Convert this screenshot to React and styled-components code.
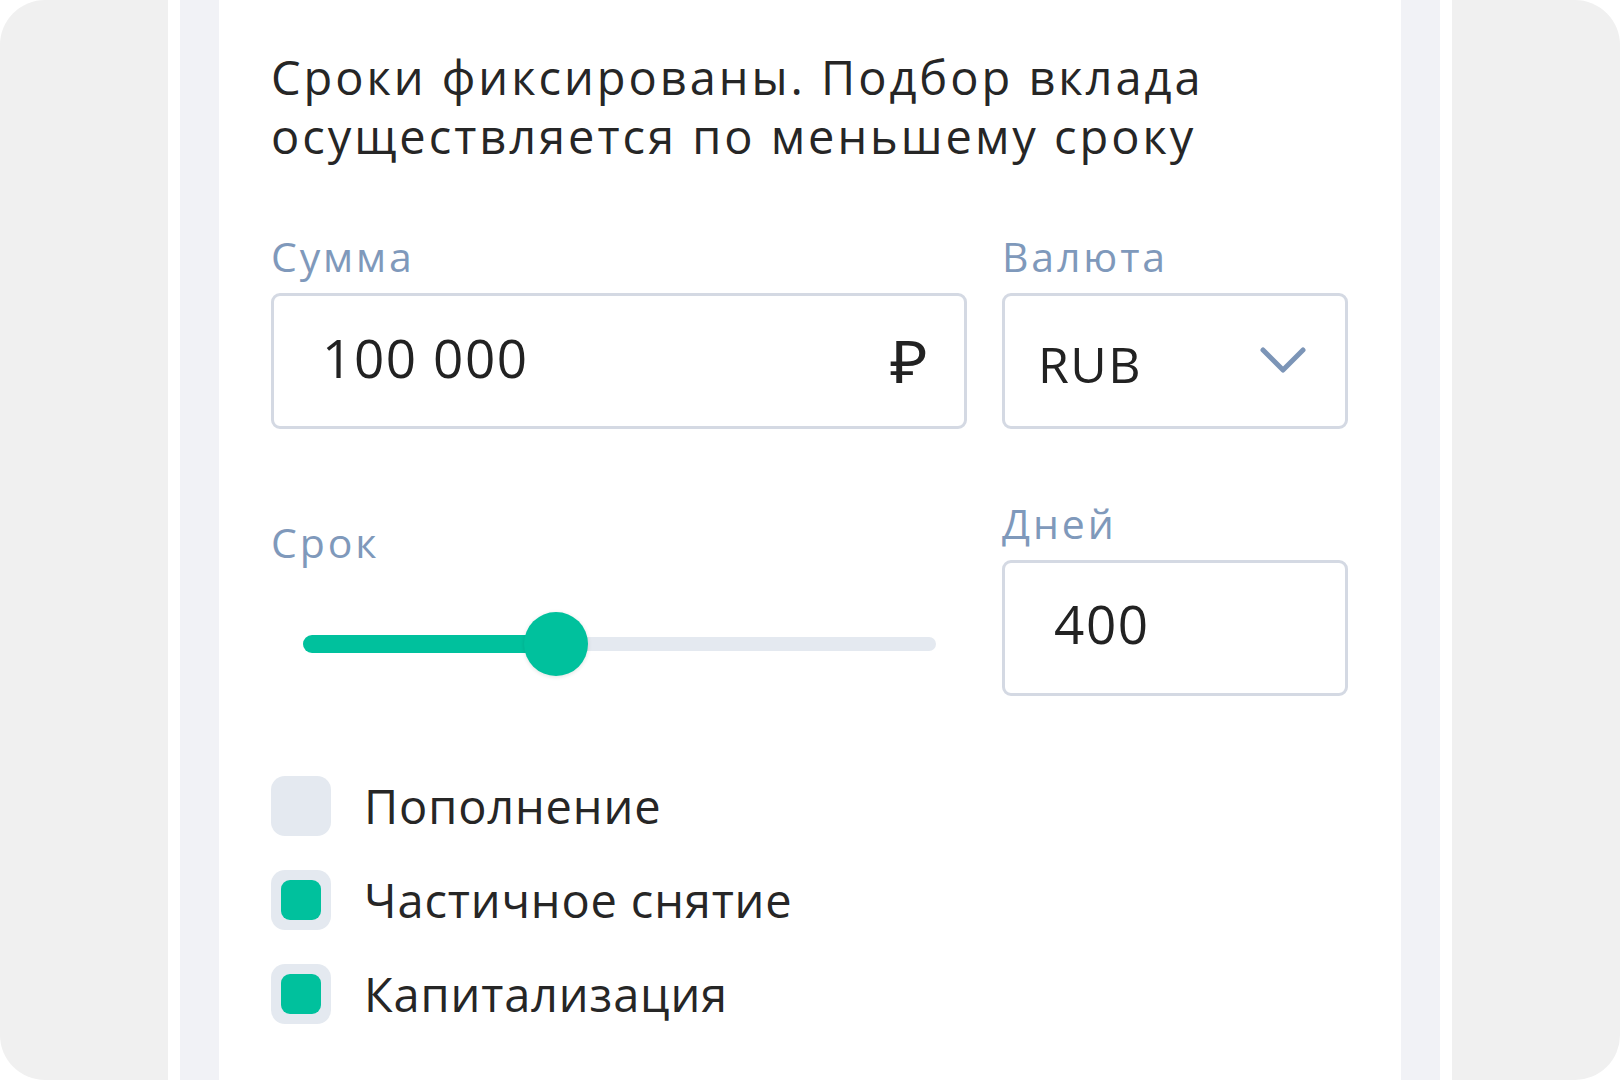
import React, { useState } from "react";
import styled, { createGlobalStyle } from "styled-components";

const GlobalStyle = createGlobalStyle`
  html, body {
    margin: 0;
    padding: 0;
    background: #ffffff;
  }
  body {
    font-family: "Open Sans", "Noto Sans", sans-serif;
    color: #242424;
  }
`;

const Frame = styled.div`
  width: 1620px;
  height: 1080px;
  background: #f0f0f0;
  border-radius: 45px;
  display: flex;
  justify-content: center;
  overflow: hidden;
`;

const Column = styled.div`
  width: 1284px;
  background: #ffffff;
  padding: 0 12px;
  box-sizing: border-box;
  display: flex;
`;

const Strip = styled.div`
  flex: 1;
  background: #f1f2f6;
  padding: 0 39px;
  display: flex;
`;

const Card = styled.div`
  flex: 1;
  background: #ffffff;
  padding: 48px 53px 0 52px;
`;

const Heading = styled.p`
  margin: 0;
  font-size: 47px;
  line-height: 59px;
  letter-spacing: 0.063em;
  color: #262626;
`;

const Row = styled.div`
  display: grid;
  grid-template-columns: 1fr 346px;
  column-gap: 35px;
  margin-top: ${p => p.$top}px;
`;

const Field = styled.div`
  display: flex;
  flex-direction: column;
  padding-top: ${p => p.$offset || 0}px;
`;

const Label = styled.div`
  font-size: 41px;
  line-height: 50px;
  letter-spacing: 0.07em;
  color: #7f99bb;
  margin-bottom: 12px;
`;

const Box = styled.div`
  height: 136px;
  box-sizing: border-box;
  border: 3px solid #d4d9e3;
  border-radius: 9px;
  display: flex;
  align-items: center;
  justify-content: space-between;
  padding: 0 ${p => p.$right}px 0 ${p => p.$left}px;
`;

const Value = styled.span`
  font-size: ${p => p.$size}px;
  letter-spacing: 0.03em;
  color: #222222;
  margin-top: ${p => p.$shift || 0}px;
`;

const Ruble = styled.span`
  font-family: "Noto Sans", "DejaVu Sans", sans-serif;
  font-size: 58px;
  line-height: 1;
  color: #222222;
  transform: scaleX(1.12);
  transform-origin: right center;
`;

const SliderArea = styled.div`
  margin: 33px 31px 0 32px;
  height: 64px;
  display: flex;
  align-items: center;
`;

const Track = styled.div`
  position: relative;
  flex: 1;
  height: 14px;
  border-radius: 7px;
  background: #e4e9f0;
`;

const Fill = styled.div`
  position: absolute;
  left: 0;
  top: -2px;
  height: 18px;
  border-radius: 9px;
  background: #00c19d;
`;

const Thumb = styled.div`
  position: absolute;
  top: 50%;
  width: 64px;
  height: 64px;
  border-radius: 50%;
  background: #00c19d;
  transform: translate(-50%, -50%);
  box-shadow: 0 1px 4px rgba(0, 0, 0, 0.12);
`;

const Options = styled.div`
  margin-top: 80px;
  display: flex;
  flex-direction: column;
  gap: 34px;
`;

const Option = styled.label`
  display: flex;
  align-items: center;
  gap: 33px;
  cursor: pointer;
`;

const Check = styled.span`
  width: 60px;
  height: 60px;
  border-radius: 14px;
  background: #e4e9f0;
  display: flex;
  align-items: center;
  justify-content: center;
  flex-shrink: 0;
`;

const CheckMark = styled.span`
  width: 40px;
  height: 40px;
  border-radius: 9px;
  background: #00c19d;
`;

const OptionText = styled.span`
  font-size: 47px;
  line-height: 60px;
  letter-spacing: 0.018em;
  color: #262626;
`;

const Chevron = () => (
  <svg width="46" height="28" viewBox="0 0 46 28" fill="none">
    <polyline
      points="3,3 23,23 43,3"
      stroke="#7c95b7"
      strokeWidth="5"
      strokeLinecap="round"
      strokeLinejoin="round"
    />
  </svg>
);

const App = () => {
  const [days] = useState(400);
  const [options, setOptions] = useState([
    { label: "Пополнение", on: false },
    { label: "Частичное снятие", on: true },
    { label: "Капитализация", on: true },
  ]);
  const percent = (days / 1000) * 100;

  const toggle = i =>
    setOptions(list => list.map((o, j) => (j === i ? { ...o, on: !o.on } : o)));

  return (
    <>
      <GlobalStyle />
      <Frame>
        <Column>
          <Strip>
            <Card>
              <Heading>
                Сроки фиксированы. Подбор вклада
                <br />
                осуществляется по меньшему сроку
              </Heading>

              <Row $top={65}>
                <Field>
                  <Label>Сумма</Label>
                  <Box $left={48} $right={36}>
                    <Value $size={53} $shift={-8}>100 000</Value>
                    <Ruble>₽</Ruble>
                  </Box>
                </Field>
                <Field>
                  <Label>Валюта</Label>
                  <Box $left={33} $right={39}>
                    <Value $size={50} $shift={6}>RUB</Value>
                    <Chevron />
                  </Box>
                </Field>
              </Row>

              <Row $top={69}>
                <Field $offset={19}>
                  <Label>Срок</Label>
                  <SliderArea>
                    <Track>
                      <Fill style={{ width: `${percent}%` }} />
                      <Thumb style={{ left: `${percent}%` }} />
                    </Track>
                  </SliderArea>
                </Field>
                <Field>
                  <Label>Дней</Label>
                  <Box $left={49} $right={30}>
                    <Value $size={53} $shift={-10}>{days}</Value>
                  </Box>
                </Field>
              </Row>

              <Options>
                {options.map((o, i) => (
                  <Option key={o.label} onClick={() => toggle(i)}>
                    <Check>{o.on && <CheckMark />}</Check>
                    <OptionText>{o.label}</OptionText>
                  </Option>
                ))}
              </Options>
            </Card>
          </Strip>
        </Column>
      </Frame>
    </>
  );
};

export default App;
